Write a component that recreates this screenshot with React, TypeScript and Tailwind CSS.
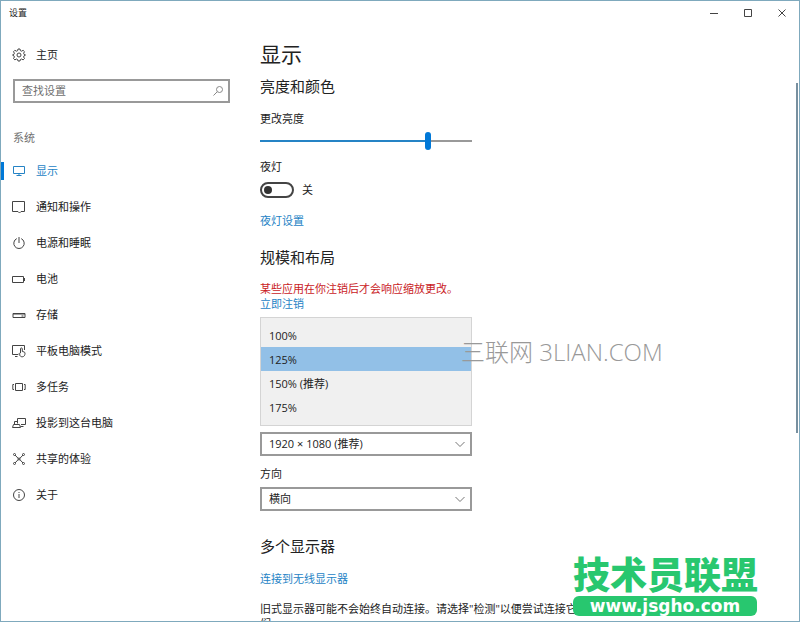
import { useState } from "react";
import type { ReactNode } from "react";
import { clsx } from "clsx";

interface NavItem {
    id: string;
    name: string;
    icon: ReactNode;
}

function Icon({ children, className }: { children: ReactNode; className?: string }) {
    return (
        <svg
            viewBox="0 0 14 14"
            fill="none"
            stroke="currentColor"
            strokeWidth="1"
            className={clsx("size-3.5 shrink-0", className)}
            aria-hidden="true"
        >
            {children}
        </svg>
    );
}

const navItems: NavItem[] = [
    {
        id: "display",
        name: "显示",
        icon: <path d="M1.5 2.5h11v7h-11zM7 9.5v2M4.5 11.5h5" />
    },
    {
        id: "notifications",
        name: "通知和操作",
        icon: <path d="M.5 1.500h12v10h-3.500L7.500 13l-1.500-1.500H.5z" />
    },
    {
        id: "power",
        name: "电源和睡眠",
        icon: <path d="M4.800 2.600a5.200 5.200 0 1 0 4.400 0M7 1v6" />
    },
    {
        id: "battery",
        name: "电池",
        icon: <path d="M.5 4.500h11v6H.5zM12.500 6v3" />
    },
    {
        id: "storage",
        name: "存储",
        icon: <path d="M1 5.500h12v4H1zM9.500 8h2M1 6h12" />
    },
    {
        id: "tablet",
        name: "平板电脑模式",
        icon: (
            <>
                <path d="M6 10.500H.5v-9h12v4.500M3 12.500h2.500" />
                <path d="M8.500 9V4.800a.9.9 0 0 1 1.800 0V7.500l1.700.4q1 .3 1 1.300c0 2-.8 3.600-2.800 3.600-1.500 0-2.200-.8-3.400-3q.7-.9 1.700.2" />
            </>
        )
    },
    {
        id: "multitasking",
        name: "多任务",
        icon: <path d="M3.500 3.500h7v7h-7zM2 4.500H.8v5H2M12 4.500h1.200v5H12" />
    },
    {
        id: "projecting",
        name: "投影到这台电脑",
        icon: <path d="M5.500 7.500v-5h8v6H9M5.500 5.500h-3v3M1.500 8.500h6l1 3h-8zM8.500 10.500h3" />
    },
    {
        id: "shared",
        name: "共享的体验",
        icon: (
            <>
                <path d="M3 3l3 3.200h2L11 3M3 11l3-3.200h2L11 11M6 6.200v1.600M8 6.200v1.600" />
                <circle cx="2.500" cy="2.500" r="1" />
                <circle cx="11.500" cy="2.500" r="1" />
                <circle cx="2.500" cy="11.500" r="1" />
                <circle cx="11.500" cy="11.500" r="1" />
            </>
        )
    },
    {
        id: "about",
        name: "关于",
        icon: (
            <>
                <circle cx="7" cy="7" r="5.500" />
                <path d="M7 6v4M7 4v1" />
            </>
        )
    }
];

const scaleOptions = ["100%", "125%", "150% (推荐)", "175%"];

function TitleBar() {
    return (
        <header className="flex h-[23px] shrink-0 items-center justify-between pl-2">
            <span className="text-[9px]">设置</span>
            <div className="flex text-[#444]">
                <button aria-label="最小化" className="flex h-full w-[34px] items-center justify-center">
                    <Icon><path d="M3 7.500h8" /></Icon>
                </button>
                <button aria-label="最大化" className="flex h-full w-[34px] items-center justify-center">
                    <Icon><path d="M3.500 3.500h7v7h-7z" /></Icon>
                </button>
                <button aria-label="关闭" className="flex h-full w-[34px] items-center justify-center">
                    <Icon><path d="M3.500 3.500l7 7M10.500 3.500l-7 7" /></Icon>
                </button>
            </div>
        </header>
    );
}

function Sidebar() {
    const [activeId, setActiveId] = useState("display");

    return (
        <aside className="w-[239px] shrink-0">
            <a href="#home" className="mt-[23px] flex h-4 items-center pl-[11px]">
                <Icon className="text-[#444]">
                    <path d="M6 1h2l.4 1.700 1.200.5 1.500-.9 1.400 1.400-.9 1.500.5 1.200L13.500 7l-1.400.8-.5 1.200.9 1.500-1.400 1.400-1.500-.9-1.200.5L8 13H6l-.4-1.500-1.200-.5-1.500.9-1.400-1.400.9-1.500-.5-1.200L.5 7l1.400-.6.5-1.200-.9-1.500 1.400-1.400 1.500.9 1.200-.5z" />
                    <circle cx="7" cy="7" r="2" />
                </Icon>
                <span className="ml-[10px]">主页</span>
            </a>

            <label className="mt-4 mr-[10px] ml-3 flex h-6 items-center border-2 border-[#999] pr-[3px] pl-[7px]">
                <input
                    type="text"
                    aria-label="查找设置"
                    placeholder="查找设置"
                    className="min-w-0 flex-1 outline-none placeholder:text-[#707070]"
                />
                <Icon className="text-[#888]">
                    <circle cx="8.500" cy="5.500" r="3" />
                    <path d="M6.200 7.800L2.500 11.500" />
                </Icon>
            </label>

            <h2 className="mt-[27px] pl-3 leading-4 text-[#707070]">系统</h2>

            <nav className="mt-[7px] flex flex-col">
                {navItems.map((item) => {
                    const isActive = activeId === item.id;

                    return (
                        <a
                            key={item.id}
                            href={`#${item.id}`}
                            onClick={() => setActiveId(item.id)}
                            className={clsx("flex h-9 items-center", isActive && "text-[#2583c5]")}
                        >
                            <span className={clsx("h-[18px] w-[3px]", isActive && "bg-[#0078d7]")} />
                            <Icon className={clsx("ml-2", !isActive && "text-[#444]")}>{item.icon}</Icon>
                            <span className="ml-[10px]">{item.name}</span>
                        </a>
                    );
                })}
            </nav>
        </aside>
    );
}

function Dropdown({ id, options }: { id: string; options: string[] }) {
    return (
        <div className="grid h-6 items-center">
            <select
                id={id}
                aria-label={id === "resolution" ? "分辨率" : undefined}
                className="col-start-1 row-start-1 h-6 w-full appearance-none border-2 border-[#999] bg-white pr-6 pl-[7px] outline-none"
            >
                {options.map((option) => (
                    <option key={option}>{option}</option>
                ))}
            </select>
            <Icon className="pointer-events-none col-start-1 row-start-1 mr-[5px] justify-self-end text-[#777]">
                <path d="M2.500 5l4.500 4.500L11.500 5" />
            </Icon>
        </div>
    );
}

function DisplaySettings() {
    const [brightness, setBrightness] = useState(80);
    const [nightLight, setNightLight] = useState(false);
    const [scale, setScale] = useState("125%");

    return (
        <main className="min-w-0 flex-1 pl-5">
            <h1 className="mt-4 text-[21px] leading-7">显示</h1>

            <section className="w-[212px]">
                <h2 className="mt-2 text-[15px] leading-5">亮度和颜色</h2>
                <label htmlFor="brightness" className="mt-[15px] block leading-4">更改亮度</label>
                <input
                    id="brightness"
                    type="range"
                    value={brightness}
                    onChange={(e) => setBrightness(Number(e.target.value))}
                    style={{ backgroundImage: `linear-gradient(to right, #2583c5 ${brightness}%, #999 ${brightness}%)` }}
                    className="mt-1 block h-5 w-full appearance-none bg-[length:100%_2px] bg-center bg-no-repeat outline-none [&::-webkit-slider-thumb]:h-[18px] [&::-webkit-slider-thumb]:w-[6px] [&::-webkit-slider-thumb]:appearance-none [&::-webkit-slider-thumb]:rounded-full [&::-webkit-slider-thumb]:bg-[#0078d7]"
                />

                <p className="mt-2 leading-4">夜灯</p>
                <label className="mt-[7px] flex h-4 items-center gap-2">
                    <input
                        type="checkbox"
                        aria-label="夜灯"
                        checked={nightLight}
                        onChange={(e) => setNightLight(e.target.checked)}
                        className="peer sr-only"
                    />
                    <span className="flex h-4 w-[34px] items-center rounded-full border-2 border-[#444] px-[2px] peer-checked:justify-end">
                        <span className="size-2 rounded-full bg-[#333]" />
                    </span>
                    {nightLight ? "开" : "关"}
                </label>
                <a href="#night-light" className="mt-[15px] block leading-4 text-[#2583c5]">夜灯设置</a>
            </section>

            <section className="w-[212px]">
                <h2 className="mt-[18px] text-[15px] leading-5">规模和布局</h2>
                <p className="mt-[14px] leading-[15px] whitespace-nowrap text-[#c9211e]">
                    某些应用在你注销后才会响应缩放更改。
                </p>
                <a href="#sign-out" className="block leading-[15px] text-[#2583c5]">立即注销</a>

                <select
                    size={4}
                    aria-label="缩放"
                    value={scale}
                    onChange={(e) => setScale(e.target.value)}
                    className="mt-[6px] block h-[109px] w-full appearance-none overflow-hidden border border-[#d4d4d4] bg-[#f0f0f0] py-[5px] outline-none"
                >
                    {scaleOptions.map((option) => (
                        <option
                            key={option}
                            value={option}
                            className="flex h-6 items-center px-2 text-[#222] checked:bg-[linear-gradient(#92c0e7,#92c0e7)] checked:text-[#222]"
                        >
                            {option}
                        </option>
                    ))}
                </select>

                <div className="mt-[6px]">
                    <Dropdown id="resolution" options={["1920 × 1080 (推荐)", "1600 × 900", "1366 × 768"]} />
                </div>
                <label htmlFor="orientation" className="mt-[10px] mb-[5px] block leading-4">方向</label>
                <Dropdown id="orientation" options={["横向", "纵向"]} />
            </section>

            <section className="w-[330px]">
                <h2 className="mt-[25px] text-[15px] leading-5">多个显示器</h2>
                <a href="#wireless" className="mt-[15px] block leading-4 text-[#2583c5]">连接到无线显示器</a>
                <p className="mt-[14px] leading-[15px]">
                    旧式显示器可能不会始终自动连接。请选择"检测"以便尝试连接它们。
                </p>
            </section>
        </main>
    );
}

export default function App() {
    return (
        <div className="relative flex h-screen flex-col overflow-hidden border border-[#7fa9bd] bg-white font-['Open_Sans','Noto_Sans_CJK_SC',sans-serif] text-[11px] text-[#222]">
            <TitleBar />
            <div className="flex min-h-0 flex-1">
                <Sidebar />
                <DisplaySettings />
                {/* Scroll thumb */}
                <div className="mt-[59px] mr-px h-[350px] w-[2px] bg-[#7890a0]" />
            </div>

            <div className="pointer-events-none absolute top-[335px] left-[460px] text-[24px] leading-8 font-light whitespace-nowrap text-[#999]">
                三联网 3LIAN.COM
            </div>

            <div className="absolute right-[42px] bottom-[5px] w-[184px]">
                <div className="text-[37px] leading-[42px] font-black whitespace-nowrap text-[#28c76f]">技术员联盟</div>
                <div className="flex h-5 items-center justify-center rounded-md bg-[#28c76f] font-['DejaVu_Sans',sans-serif] text-[17px] leading-5 font-bold text-white">
                    www.jsgho.com
                </div>
            </div>
        </div>
    );
}
